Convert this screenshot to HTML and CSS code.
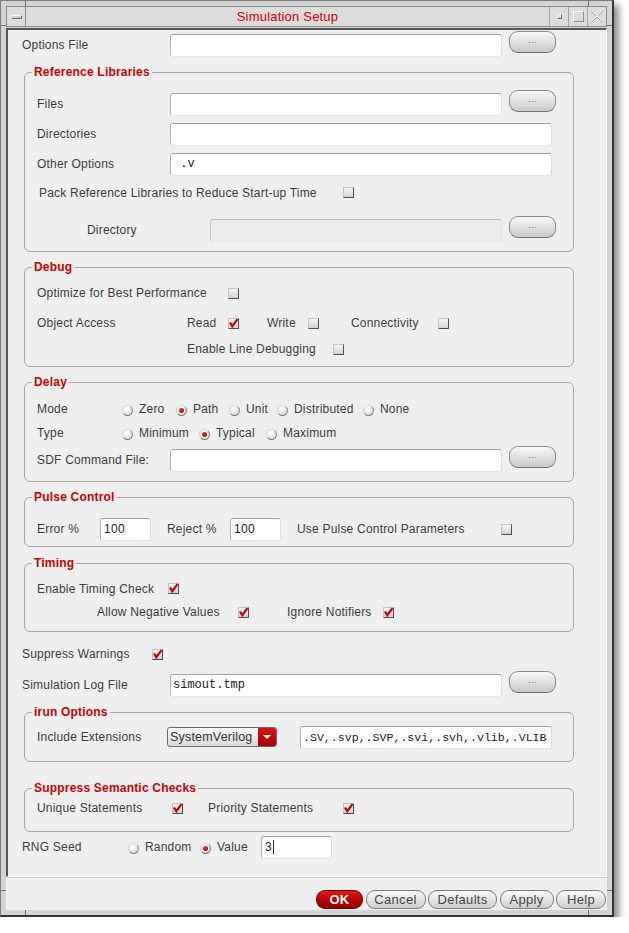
FILE: index.html
```html
<!DOCTYPE html>
<html>
<head>
<meta charset="utf-8">
<title>Simulation Setup</title>
<link rel="stylesheet" href="styles.css">
</head>
<body>
<div class="window">
  <span class="tick tick-top tick-a"></span>
  <span class="tick tick-top tick-b"></span>
  <span class="tick tick-bot tick-a"></span>
  <span class="tick tick-bot tick-b"></span>
  <span class="tick tick-side tick-l tick-c"></span>
  <span class="tick tick-side tick-r tick-c"></span>
  <span class="tick tick-side tick-l tick-d"></span>
  <span class="tick tick-side tick-r tick-d"></span>

  <div class="titlebar">
    <div class="tbtn tbtn-menu"><span class="menu-dash"></span></div>
    <div class="ttl">Simulation Setup</div>
    <div class="tbtn"><span class="min-dot"></span></div>
    <div class="tbtn"><span class="max-sq"></span></div>
    <div class="tbtn">
      <svg class="close-x" width="14" height="14" viewBox="0 0 14 14"><path d="M1 1 L13 13 M13 1 L1 13" stroke="#9a9a9a" stroke-width="1" fill="none"/><path d="M2 1 L13 12 M12 1 L1 12" stroke="#f4f4f4" stroke-width="1" fill="none"/></svg>
    </div>
  </div>

  <div class="content">
    <div class="row h22">
      <span class="lbl">Options File</span>
      <span class="field short"></span>
      <span class="browse">...</span>
    </div>

    <div class="group g-ref">
      <div class="legend">Reference Libraries</div>
      <div class="row h30 mt10">
        <span class="lbl">Files</span>
        <span class="field short"></span>
        <span class="browse">...</span>
      </div>
      <div class="row h30">
        <span class="lbl">Directories</span>
        <span class="field long"></span>
      </div>
      <div class="row h30">
        <span class="lbl">Other Options</span>
        <span class="field long">&nbsp;.v</span>
      </div>
      <div class="row h27">
        <span class="txt pack">Pack Reference Libraries to Reduce Start-up Time</span>
        <span class="cb"></span>
      </div>
      <div class="row h30 mt9">
        <span class="lbl dir-lbl">Directory</span>
        <span class="field dir disabled"></span>
        <span class="browse">...</span>
      </div>
    </div>

    <div class="group g-debug">
      <div class="legend">Debug</div>
      <div class="row h26 mt6">
        <span class="txt w191">Optimize for Best Performance</span>
        <span class="cb"></span>
      </div>
      <div class="row h26 mt4">
        <span class="txt w150">Object Access</span>
        <span class="txt w41">Read</span>
        <span class="cb on"><svg viewBox="0 0 11 11" width="11" height="11"><path d="M2 4.5 L4.3 8.2 L9.5 1.2" stroke="#c80000" stroke-width="2.2" fill="none"/></svg></span>
        <span class="txt w41 ml28">Write</span>
        <span class="cb"></span>
        <span class="txt w87 ml32">Connectivity</span>
        <span class="cb"></span>
      </div>
      <div class="row h26">
        <span class="txt w146 ml150">Enable Line Debugging</span>
        <span class="cb"></span>
      </div>
    </div>

    <div class="group g-delay">
      <div class="legend">Delay</div>
      <div class="row h24 mt8">
        <span class="txt w85">Mode</span>
        <span class="opt w54"><span class="rd"></span>Zero</span>
        <span class="opt w53"><span class="rd on"></span>Path</span>
        <span class="opt w48"><span class="rd"></span>Unit</span>
        <span class="opt w86"><span class="rd"></span>Distributed</span>
        <span class="opt"><span class="rd"></span>None</span>
      </div>
      <div class="row h24">
        <span class="txt w85">Type</span>
        <span class="opt w77"><span class="rd"></span>Minimum</span>
        <span class="opt w67"><span class="rd on"></span>Typical</span>
        <span class="opt"><span class="rd"></span>Maximum</span>
      </div>
      <div class="row h24 mt3">
        <span class="lbl">SDF Command File:</span>
        <span class="field short"></span>
        <span class="browse">...</span>
      </div>
    </div>

    <div class="group g-pulse">
      <div class="legend">Pulse Control</div>
      <div class="row h26 mt12">
        <span class="txt w63">Error %</span>
        <span class="field num">100</span>
        <span class="txt w63 ml16">Reject %</span>
        <span class="field num">100</span>
        <span class="txt w204 ml16">Use Pulse Control Parameters</span>
        <span class="cb"></span>
      </div>
    </div>

    <div class="group g-timing">
      <div class="legend">Timing</div>
      <div class="row h23 mt7">
        <span class="txt w131">Enable Timing Check</span>
        <span class="cb on"><svg viewBox="0 0 11 11" width="11" height="11"><path d="M2 4.5 L4.3 8.2 L9.5 1.2" stroke="#c80000" stroke-width="2.2" fill="none"/></svg></span>
      </div>
      <div class="row h24">
        <span class="txt w141 ml60">Allow Negative Values</span>
        <span class="cb on"><svg viewBox="0 0 11 11" width="11" height="11"><path d="M2 4.5 L4.3 8.2 L9.5 1.2" stroke="#c80000" stroke-width="2.2" fill="none"/></svg></span>
        <span class="txt w96 ml38">Ignore Notifiers</span>
        <span class="cb on"><svg viewBox="0 0 11 11" width="11" height="11"><path d="M2 4.5 L4.3 8.2 L9.5 1.2" stroke="#c80000" stroke-width="2.2" fill="none"/></svg></span>
      </div>
    </div>

    <div class="row h24 mt10">
      <span class="txt w130">Suppress Warnings</span>
      <span class="cb on"><svg viewBox="0 0 11 11" width="11" height="11"><path d="M2 4.5 L4.3 8.2 L9.5 1.2" stroke="#c80000" stroke-width="2.2" fill="none"/></svg></span>
    </div>
    <div class="row h26 mt6">
      <span class="lbl">Simulation Log File</span>
      <span class="field short">simout.tmp</span>
      <span class="browse">...</span>
    </div>

    <div class="group g-irun">
      <div class="legend">irun Options</div>
      <div class="row h26 mt5">
        <span class="txt w130">Include Extensions</span>
        <span class="dropdown"><span class="dd-text">SystemVerilog</span><span class="dd-arrow"><span class="tri"></span></span></span>
        <span class="field ext">.SV,.svp,.SVP,.svi,.svh,.vlib,.VLIB</span>
      </div>
    </div>

    <div class="group g-sem">
      <div class="legend">Suppress Semantic Checks</div>
      <div class="row h20 mt3">
        <span class="txt w135">Unique Statements</span>
        <span class="cb on"><svg viewBox="0 0 11 11" width="11" height="11"><path d="M2 4.5 L4.3 8.2 L9.5 1.2" stroke="#c80000" stroke-width="2.2" fill="none"/></svg></span>
        <span class="txt w135 ml25">Priority Statements</span>
        <span class="cb on"><svg viewBox="0 0 11 11" width="11" height="11"><path d="M2 4.5 L4.3 8.2 L9.5 1.2" stroke="#c80000" stroke-width="2.2" fill="none"/></svg></span>
      </div>
    </div>

    <div class="row h24 mt3">
      <span class="txt w106">RNG Seed</span>
      <span class="opt w72"><span class="rd"></span>Random</span>
      <span class="opt w61"><span class="rd on"></span>Value</span>
      <span class="field seed">3<span class="caret"></span></span>
    </div>
  </div>

  <div class="buttonbar">
    <span class="btn btn-ok">OK</span>
    <span class="btn w60">Cancel</span>
    <span class="btn w69">Defaults</span>
    <span class="btn w54">Apply</span>
    <span class="btn w50">Help</span>
  </div>
</div>
</body>
</html>
```

FILE: styles.css
```css
* { box-sizing: border-box; }

body {
  margin: 0;
  background: #ffffff;
  font-family: "Liberation Sans", Arial, Helvetica, sans-serif;
  font-size: 12px;
  letter-spacing: 0.2px;
  color: #3c3c3c;
}

/* ---------- window frame ---------- */
.window {
  position: relative;
  width: 614px;
  height: 917px;
  padding: 5px;
  display: flex;
  flex-direction: column;
  gap: 1px;
  background: #d4d4d4;
  border: 1px solid #7a7a7a;
  border-right: 2px solid #333;
  border-bottom: 2px solid #333;
  box-shadow: 5px 5px 7px rgba(0, 0, 0, 0.45);
}

.tick { position: absolute; background: #707070; }
.tick-top { top: 0; width: 1px; height: 5px; }
.tick-bot { bottom: 0; width: 1px; height: 5px; }
.tick-a { left: 24px; }
.tick-b { left: 587px; }
.tick-side { width: 5px; height: 1px; }
.tick-l { left: 0; }
.tick-r { right: 0; }
.tick-c { top: 24px; }
.tick-d { top: 889px; }

/* ---------- title bar ---------- */
.titlebar {
  flex: none;
  height: 21px;
  display: flex;
  border: 1px solid #8c8c8c;
  background: #dcdcdc;
}
.tbtn {
  flex: none;
  width: 19px;
  display: flex;
  align-items: center;
  justify-content: center;
  border-left: 1px solid #a4a4a4;
}
.tbtn-menu { border-left: none; border-right: 1px solid #8c8c8c; }
.menu-dash {
  width: 11px;
  height: 4px;
  border: 1px solid;
  border-color: #fafafa #6a6a6a #6a6a6a #fafafa;
  background: #d0d0d0;
}
.ttl {
  flex: 1;
  text-align: center;
  color: #d40000;
  font-size: 13px;
  line-height: 19px;
  letter-spacing: 0.2px;
}
.min-dot {
  width: 5px;
  height: 5px;
  border: 1px solid;
  border-color: #fafafa #6a6a6a #6a6a6a #fafafa;
}
.max-sq {
  width: 11px;
  height: 11px;
  border: 1px solid;
  border-color: #fafafa #8a8a8a #8a8a8a #fafafa;
}

/* ---------- content ---------- */
.content {
  flex: none;
  height: 849px;
  background: #efefef;
  border-top: 2px solid #555;
  border-left: 2px solid #555;
  border-right: 1px solid #fafafa;
  border-bottom: 1px solid #fafafa;
  padding: 4px 0 0 14px;
}

.row { display: flex; align-items: center; }
.h20 { height: 20px; }
.h22 { height: 22px; }
.h23 { height: 23px; }
.h24 { height: 24px; }
.h26 { height: 26px; }
.h27 { height: 27px; }
.h30 { height: 30px; }

.mt3 { margin-top: 3px; }
.mt4 { margin-top: 4px; }
.mt5 { margin-top: 5px; }
.mt6 { margin-top: 6px; }
.mt7 { margin-top: 7px; }
.mt8 { margin-top: 8px; }
.mt9 { margin-top: 9px; }
.mt10 { margin-top: 10px; }
.mt12 { margin-top: 12px; }

.ml16 { margin-left: 16px; }
.ml25 { margin-left: 25px; }
.ml28 { margin-left: 28px; }
.ml32 { margin-left: 32px; }
.ml38 { margin-left: 38px; }
.ml60 { margin-left: 60px; }
.ml150 { margin-left: 150px; }

.lbl, .txt { flex: none; white-space: nowrap; }
.lbl { width: 148px; }
.group .lbl { width: 133px; }
.group .dir-lbl { width: 123px; margin-left: 50px; }
.pack { width: 304px; margin-left: 2px; }

.w41 { width: 41px; }
.w48 { width: 48px; }
.w50 { width: 50px; }
.w53 { width: 53px; }
.w54 { width: 54px; }
.w60 { width: 60px; }
.w61 { width: 61px; }
.w63 { width: 63px; }
.w67 { width: 67px; }
.w69 { width: 69px; }
.w72 { width: 72px; }
.w77 { width: 77px; }
.w85 { width: 85px; }
.w86 { width: 86px; }
.w87 { width: 87px; }
.w96 { width: 96px; }
.w106 { width: 106px; }
.w130 { width: 130px; }
.w131 { width: 131px; }
.w135 { width: 135px; }
.w141 { width: 141px; }
.w146 { width: 146px; }
.w150 { width: 150px; }
.w191 { width: 191px; }
.w204 { width: 204px; }

/* ---------- group boxes ---------- */
.group {
  width: 550px;
  margin-left: 2px;
  border: 1px solid #a6a6a6;
  border-radius: 6px;
  padding: 0 12px;
}
.legend {
  width: max-content;
  height: 14px;
  line-height: 14px;
  margin: -8px 0 0 -5px;
  padding: 0 2px;
  background: #efefef;
  color: #cc0000;
  font-weight: bold;
  letter-spacing: 0.2px;
}
.g-ref { margin-top: 16px; padding-bottom: 6px; }
.g-debug { margin-top: 15px; padding-bottom: 4px; }
.g-delay { margin-top: 15px; padding-bottom: 9px; }
.g-pulse { margin-top: 15px; padding-bottom: 4px; }
.g-timing { margin-top: 16px; padding-bottom: 7px; }
.g-irun { margin-top: 14px; padding-bottom: 11px; }
.g-sem { margin-top: 26px; padding-bottom: 13px; }

/* ---------- fields ---------- */
.field {
  flex: none;
  height: 23px;
  background: #ffffff;
  border: 1px solid;
  border-color: #a2a2a2 #dedede #e4e4e4 #b2b2b2;
  border-radius: 3px;
  padding-left: 2px;
  font-family: "Liberation Mono", "DejaVu Sans Mono", monospace;
  font-size: 12px;
  letter-spacing: 0;
  line-height: 21px;
  color: #222;
  white-space: nowrap;
  overflow: hidden;
}
.short { width: 332px; }
.long { width: 382px; }
.dir { width: 292px; }
.disabled { background: #ececec; border-color: #b8b8b8 #e2e2e2 #e6e6e6 #c2c2c2; }
.num {
  width: 51px;
  font-family: "Liberation Sans", Arial, sans-serif;
  padding-left: 3px;
  letter-spacing: 0.3px;
}
.ext { width: 252px; margin-left: 23px; font-size: 11.6px; }
.seed {
  width: 71px;
  font-family: "Liberation Sans", Arial, sans-serif;
  padding-left: 3px;
  display: flex;
  align-items: center;
}
.caret { width: 1px; height: 14px; background: #222; margin-left: 1px; }

.browse {
  flex: none;
  width: 47px;
  height: 22px;
  margin-left: 7px;
  margin-bottom: 7px;
  border: 1px solid #8a8a8a;
  border-bottom-color: #6e6e6e;
  border-radius: 9px;
  background: linear-gradient(#f8f8f8, #dcdcdc 60%, #c8c8c8);
  color: #666;
  font-size: 9px;
  letter-spacing: 0.5px;
  display: flex;
  align-items: center;
  justify-content: center;
  padding-bottom: 3px;
}

/* ---------- checkbox & radio ---------- */
.cb {
  flex: none;
  width: 11px;
  height: 11px;
  border: 1px solid;
  border-color: #c4c4c4 #4e4e4e #4e4e4e #c4c4c4;
  background: linear-gradient(#f6f6f6, #d2d2d2);
  display: flex;
  align-items: center;
  justify-content: center;
  overflow: visible;
}
.cb svg { flex: none; }

.opt { flex: none; display: flex; align-items: center; white-space: nowrap; }
.rd {
  flex: none;
  width: 11px;
  height: 11px;
  margin-top: 2px;
  margin-right: 6px;
  border-radius: 50%;
  border: 1px solid;
  border-color: #dadada #8a8a8a #7a7a7a #cfcfcf;
  background: radial-gradient(circle at 38% 32%, #ffffff 0%, #f4f4f4 35%, #d0d0d0 80%, #b8b8b8 100%);
  display: flex;
  align-items: center;
  justify-content: center;
}
.rd.on::after {
  content: "";
  width: 5px;
  height: 5px;
  border-radius: 50%;
  background: radial-gradient(circle at 40% 35%, #ff3030, #c00000 70%);
  box-shadow: 0 0 0 1px rgba(255, 255, 255, 0.8);
}

/* ---------- dropdown ---------- */
.dropdown {
  flex: none;
  width: 110px;
  height: 20px;
  display: flex;
  border: 1px solid #6a6a6a;
  border-radius: 3px;
  background: linear-gradient(#fbfbfb, #dadada);
  overflow: hidden;
}
.dd-text {
  flex: 1;
  padding-left: 2px;
  font-size: 12.5px;
  line-height: 18px;
  letter-spacing: 0.2px;
  color: #333;
}
.dd-arrow {
  width: 18px;
  background: linear-gradient(#d81414, #a80000);
  display: flex;
  align-items: center;
  justify-content: center;
}
.tri {
  width: 0;
  height: 0;
  border-left: 4px solid transparent;
  border-right: 4px solid transparent;
  border-top: 4px solid #ffffff;
}

/* ---------- button bar ---------- */
.buttonbar {
  flex: 1;
  display: flex;
  justify-content: flex-end;
  align-items: flex-end;
  gap: 2.5px;
  padding: 0 1px 1px 0;
  background: #efefef;
}
.btn {
  flex: none;
  height: 19px;
  border: 1px solid #7c7c7c;
  border-radius: 9px;
  background: linear-gradient(#fbfbfb, #e2e2e2 55%, #cdcdcd);
  color: #444;
  font-size: 13px;
  letter-spacing: 0.3px;
  display: flex;
  align-items: center;
  justify-content: center;
}
.btn-ok {
  width: 47px;
  background: linear-gradient(#e41a1a, #b00000 60%, #900000);
  border-color: #6a0000;
  color: #ffffff;
  font-weight: bold;
}
```
